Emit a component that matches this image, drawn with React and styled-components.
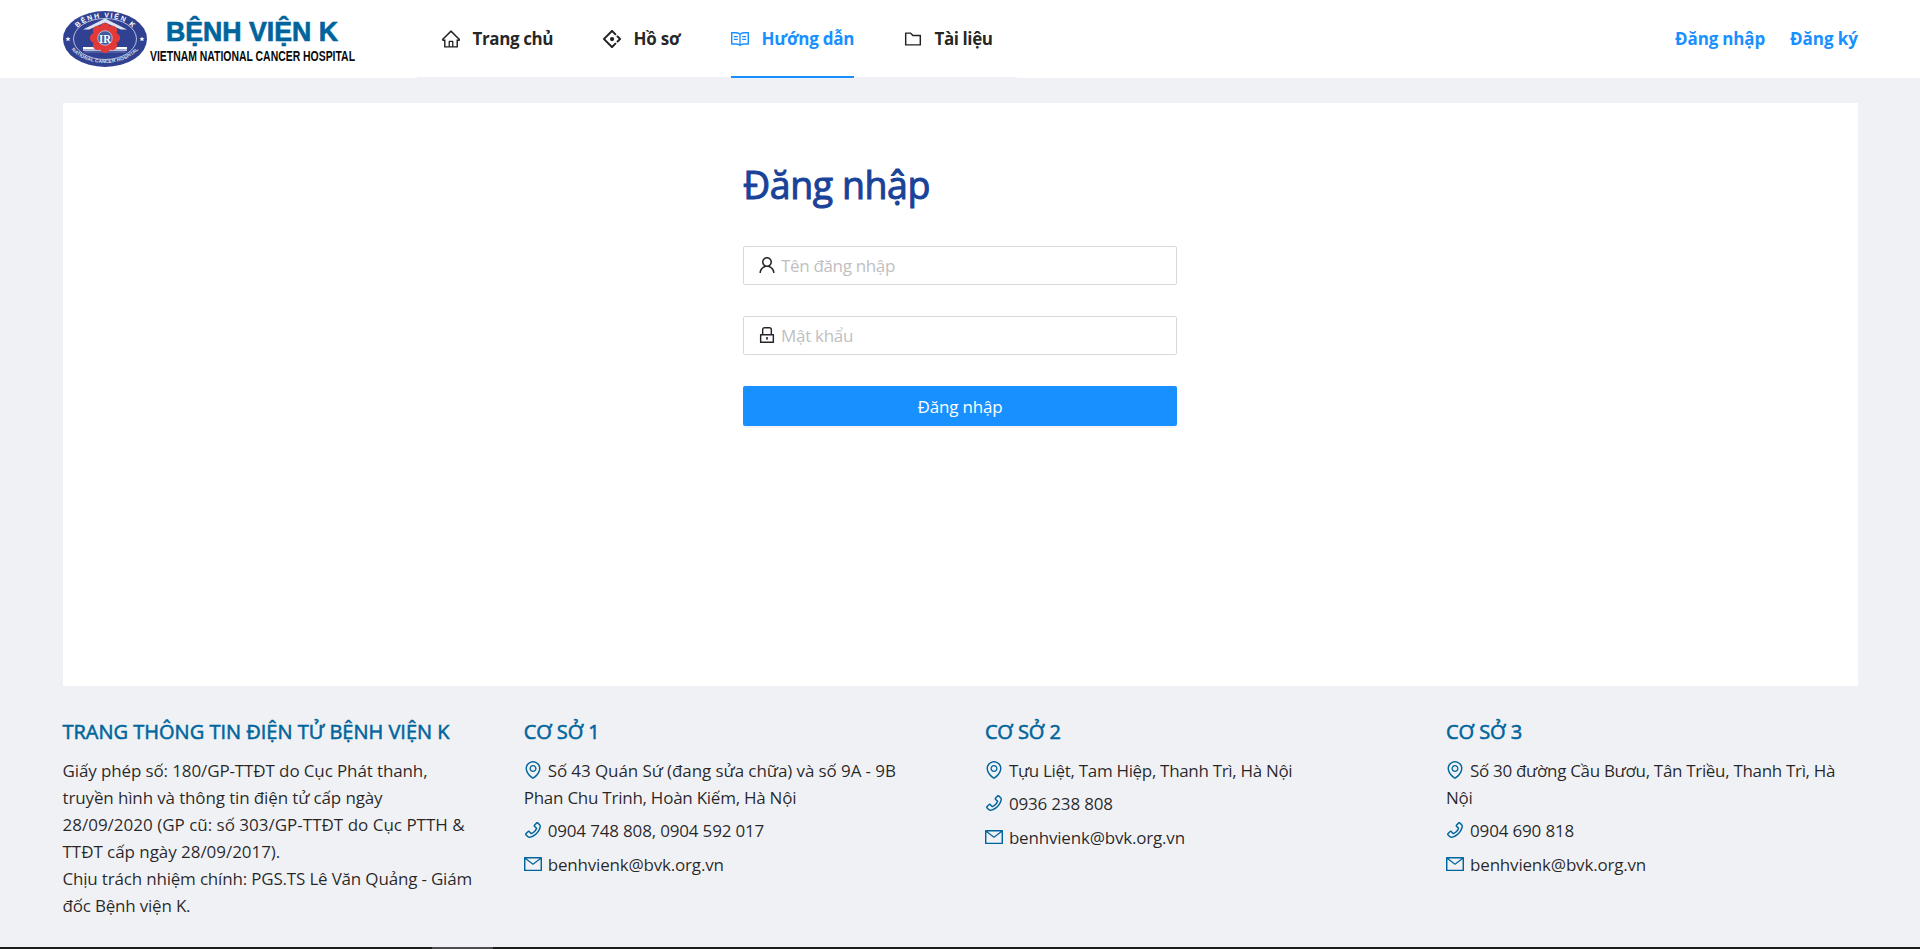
import React from "react";
import styled, { createGlobalStyle } from "styled-components";
import {
  AiOutlineHome,
  AiOutlineAntDesign,
  AiOutlineRead,
  AiOutlineFolder,
  AiOutlineUser,
  AiOutlineLock,
  AiOutlineEnvironment,
  AiOutlinePhone,
  AiOutlineMail,
} from "react-icons/ai";

const GlobalStyle = createGlobalStyle`
  *, *::before, *::after { box-sizing: border-box; }
  body {
    margin: 0;
    background: #f0f1f5;
    color: rgba(0, 0, 0, 0.85);
    font-family: "Open Sans", "Noto Sans", sans-serif;
    font-size: 17px;
    font-weight: 400;
    line-height: 27px;
    overflow: hidden;
  }
  h1, h2, p { margin: 0; }
`;

const Page = styled.div`
  display: flex;
  flex-direction: column;
  height: 949px;
`;

const Header = styled.header`
  display: flex;
  flex: none;
  height: 78px;
  padding: 0 62px 0 63px;
  background: #fff;
`;

const LogoLink = styled.a`
  display: block;
  width: 354px;
  height: 78px;
  svg { display: block; overflow: visible; }
`;

const Menu = styled.nav`
  display: flex;
  width: 600px;
  border-bottom: 1px solid #f0f0f2;
`;

const MenuItem = styled.a`
  display: flex;
  flex: none;
  width: ${(p) => p.$width}px;
  height: 78px;
  padding: 0 25px;
  color: ${(p) => (p.$active ? "#1890ff" : "rgba(0, 0, 0, 0.87)")};
`;

const MenuInner = styled.span`
  display: flex;
  align-items: center;
  gap: 12.5px;
  width: 100%;
  border-bottom: 2px solid ${(p) => (p.$active ? "#1890ff" : "transparent")};
  border-top: 2px solid transparent;
  svg { flex: none; }
`;

const StrongText = styled.span`
  padding-bottom: 1px;
  font-weight: 700;
  letter-spacing: ${(p) => p.$track}px;
  white-space: nowrap;
`;

const Account = styled.div`
  display: flex;
  align-items: center;
  gap: 25px;
  margin-left: auto;
  color: #1890ff;
`;

const Card = styled.main`
  display: flex;
  flex: none;
  justify-content: center;
  height: 583px;
  margin: 25px 62px 0 63px;
  padding-top: 54px;
  background: #fff;
`;

const Form = styled.form`
  display: flex;
  flex-direction: column;
  width: 434px;
  margin-right: 1px;
`;

const Title = styled.h1`
  height: 58px;
  margin-bottom: 31px;
  color: #1a4298;
  font-size: 37.5px;
  font-weight: 400;
  line-height: 56px;
  letter-spacing: -0.45px;
  -webkit-text-stroke: 1px currentColor;
`;

const Field = styled.label`
  display: flex;
  align-items: center;
  gap: 5px;
  height: 39px;
  margin-bottom: 31px;
  padding: 0 14px;
  border: 1px solid #d9d9d9;
  border-radius: 2px;
  svg { margin-bottom: 1px; }
`;

const Input = styled.input`
  flex: 1;
  min-width: 0;
  padding: 0;
  border: 0;
  outline: 0;
  background: transparent;
  font: inherit;
  letter-spacing: ${(p) => p.$track}px;
  &::placeholder { color: #bfbfbf; opacity: 1; }
`;

const Submit = styled.button`
  height: 40px;
  padding: 0;
  border: 0;
  border-radius: 2px;
  background: #1890ff;
  box-shadow: 0 2px 0 rgba(0, 0, 0, 0.045);
  color: #fff;
  font: inherit;
  letter-spacing: -0.17px;
`;

const Footer = styled.footer`
  display: grid;
  grid-template-columns: repeat(4, 412px);
  column-gap: 49.2px;
  flex: 1;
  padding: 31px 0 0 62.5px;
`;

const FooterTitle = styled.h2`
  margin-bottom: 10px;
  color: #00659c;
  font-size: 20px;
  font-weight: 400;
  line-height: 30px;
  letter-spacing: ${(p) => p.$track}px;
  white-space: nowrap;
  -webkit-text-stroke: 0.55px currentColor;
`;

const Line = styled.span`
  display: block;
  letter-spacing: ${(p) => p.$track}px;
  white-space: nowrap;
`;

const Contacts = styled.div`
  display: flex;
  flex-direction: column;
  gap: 6.3px;
`;

const Contact = styled.p`
  svg {
    margin-right: 6px;
    color: #00659c;
    vertical-align: -2px;
  }
`;

const Taskbar = styled.div`
  display: flex;
  flex: none;
  height: 2px;
  padding-left: 432px;
  background: #1c1e1c;
`;

const TaskbarTab = styled.span`
  width: 61px;
  background: #4c4d4c;
`;

/* The glyphs leave a 64-unit margin on each side of their 1024 grid; trim it. */
const trimmed = { size: 18, viewBox: "64 64 896 896" };

function Logo() {
  const petals = [0, 45, 90, 135, 180, 225, 270, 315];
  return (
    <svg width="300" height="78" viewBox="0 0 300 78" role="img" aria-label="Bệnh viện K">
      <defs>
        <path id="arcTop" d="M10 39 A32 21.5 0 0 1 74 39" />
        <path id="arcBottom" d="M4.5 38 A37.5 25 0 0 0 79.5 38" />
      </defs>
      <ellipse cx="42" cy="39" rx="42" ry="28" fill="#2f4190" />
      <ellipse cx="42" cy="39" rx="31.500" ry="20.500" fill="none" stroke="#c5cbe4" strokeWidth="0.9" />
      <path d="M20 29.500 L42 18.500 L64 29.500 L58 29.500 L42 22.500 L26 29.500 Z" fill="#dfe4f3" />
      <path d="M20 47h44v2.500h-44z" fill="#fff" />
      <path d="M20 49.500h44v1.600h-44z" fill="#b5bcdd" />
      <path d="M21.500 52h41" stroke="#7681b8" strokeWidth="0.9" />
      {petals.map((angle) => (
        <circle key={angle} cx="42" cy="27.900" r="5" fill="#e23a38" transform={`rotate(${angle} 42 38)`} />
      ))}
      <circle cx="42" cy="38" r="10" fill="#e23a38" />
      <circle cx="42" cy="38" r="7.200" fill="#3d5aa3" stroke="#c9cfe6" strokeWidth="0.8" />
      <text x="42" y="42.500" textAnchor="middle" fontFamily="Liberation Serif, serif" fontWeight="700" fontSize="13" textLength="12" lengthAdjust="spacingAndGlyphs" fill="#fff">IR</text>
      <path id="star" d="M5 36.500l.7 1.800h1.900l-1.500 1.100.6 1.900-1.700-1.100-1.700 1.100.6-1.900-1.500-1.100h1.900z" fill="#fff" />
      <use href="#star" x="74" />
      <text fontFamily="Liberation Sans, sans-serif" fontWeight="700" fontSize="7" fill="#fff">
        <textPath href="#arcTop" startOffset="50%" textAnchor="middle" textLength="60">BỆNH VIỆN K</textPath>
      </text>
      <text fontFamily="Liberation Sans, sans-serif" fontWeight="700" fontSize="4.800" fill="#dfe3f2">
        <textPath href="#arcBottom" startOffset="50%" textAnchor="middle" textLength="74">NATIONAL CANCER HOSPITAL</textPath>
      </text>
      <text x="103" y="41" fontFamily="Liberation Sans, sans-serif" fontWeight="700" fontSize="28.500" textLength="172" lengthAdjust="spacingAndGlyphs" fill="#00659c" stroke="#00659c" strokeWidth="0.7">BỆNH VIỆN K</text>
      <text x="87" y="61" fontFamily="Liberation Sans, sans-serif" fontWeight="700" fontSize="14.500" textLength="205" lengthAdjust="spacingAndGlyphs" fill="#0a0a0a">VIETNAM NATIONAL CANCER HOSPITAL</text>
    </svg>
  );
}

const menu = [
  { label: "Trang chủ", Icon: AiOutlineHome, width: 161, track: -0.4 },
  { label: "Hồ sơ", Icon: AiOutlineAntDesign, width: 128, track: -0.25 },
  { label: "Hướng dẫn", Icon: AiOutlineRead, width: 173, track: -0.24, active: true },
  { label: "Tài liệu", Icon: AiOutlineFolder, width: 138, track: -0.41 },
];

const about = [
  ["Giấy phép số: 180/GP-TTĐT do Cục Phát thanh,", -0.12],
  ["truyền hình và thông tin điện tử cấp ngày", -0.135],
  ["28/09/2020 (GP cũ: số 303/GP-TTĐT do Cục PTTH &", 0],
  ["TTĐT cấp ngày 28/09/2017).", -0.05],
  ["Chịu trách nhiệm chính: PGS.TS Lê Văn Quảng - Giám", -0.185],
  ["đốc Bệnh viện K.", -0.2],
];

const branches = [
  {
    title: "CƠ SỞ 1",
    address: [
      ["Số 43 Quán Sứ (đang sửa chữa) và số 9A - 9B", -0.095],
      ["Phan Chu Trinh, Hoàn Kiếm, Hà Nội", -0.25],
    ],
    phone: "0904 748 808, 0904 592 017",
  },
  {
    title: "CƠ SỞ 2",
    address: [["Tựu Liệt, Tam Hiệp, Thanh Trì, Hà Nội", -0.32]],
    phone: "0936 238 808",
  },
  {
    title: "CƠ SỞ 3",
    address: [
      ["Số 30 đường Cầu Bươu, Tân Triều, Thanh Trì, Hà", -0.32],
      ["Nội", -0.3],
    ],
    phone: "0904 690 818",
  },
];

function Branch({ title, address, phone }) {
  return (
    <section>
      <FooterTitle $track={-0.1}>{title}</FooterTitle>
      <Contacts>
        <Contact>
          {address.map(([text, track], i) => (
            <Line key={text} $track={track}>
              {i === 0 && <AiOutlineEnvironment {...trimmed} />}
              {text}
            </Line>
          ))}
        </Contact>
        <Contact>
          <Line $track={-0.17}>
            <AiOutlinePhone {...trimmed} />
            {phone}
          </Line>
        </Contact>
        <Contact>
          <Line $track={-0.19}>
            <AiOutlineMail {...trimmed} />
            benhvienk@bvk.org.vn
          </Line>
        </Contact>
      </Contacts>
    </section>
  );
}

export default function App() {
  return (
    <Page>
      <GlobalStyle />
      <Header>
        <LogoLink>
          <Logo />
        </LogoLink>
        <Menu>
          {menu.map(({ label, Icon, width, track, active }) => (
            <MenuItem key={label} $width={width} $active={active}>
              <MenuInner $active={active}>
                <Icon {...trimmed} />
                <StrongText $track={track}>{label}</StrongText>
              </MenuInner>
            </MenuItem>
          ))}
        </Menu>
        <Account>
          <StrongText $track={-0.16}>Đăng nhập</StrongText>
          <StrongText $track={-0.05}>Đăng ký</StrongText>
        </Account>
      </Header>
      <Card>
        <Form>
          <Title>Đăng nhập</Title>
          <Field>
            <AiOutlineUser {...trimmed} />
            <Input placeholder="Tên đăng nhập" $track={-0.34} />
          </Field>
          <Field>
            <AiOutlineLock {...trimmed} />
            <Input type="password" placeholder="Mật khẩu" $track={-0.3} />
          </Field>
          <Submit type="button">Đăng nhập</Submit>
        </Form>
      </Card>
      <Footer>
        <section>
          <FooterTitle $track={0}>TRANG THÔNG TIN ĐIỆN TỬ BỆNH VIỆN K</FooterTitle>
          <p>
            {about.map(([text, track]) => (
              <Line key={text} $track={track}>{text}</Line>
            ))}
          </p>
        </section>
        {branches.map((branch) => (
          <Branch key={branch.title} {...branch} />
        ))}
      </Footer>
      <Taskbar>
        <TaskbarTab />
      </Taskbar>
    </Page>
  );
}
